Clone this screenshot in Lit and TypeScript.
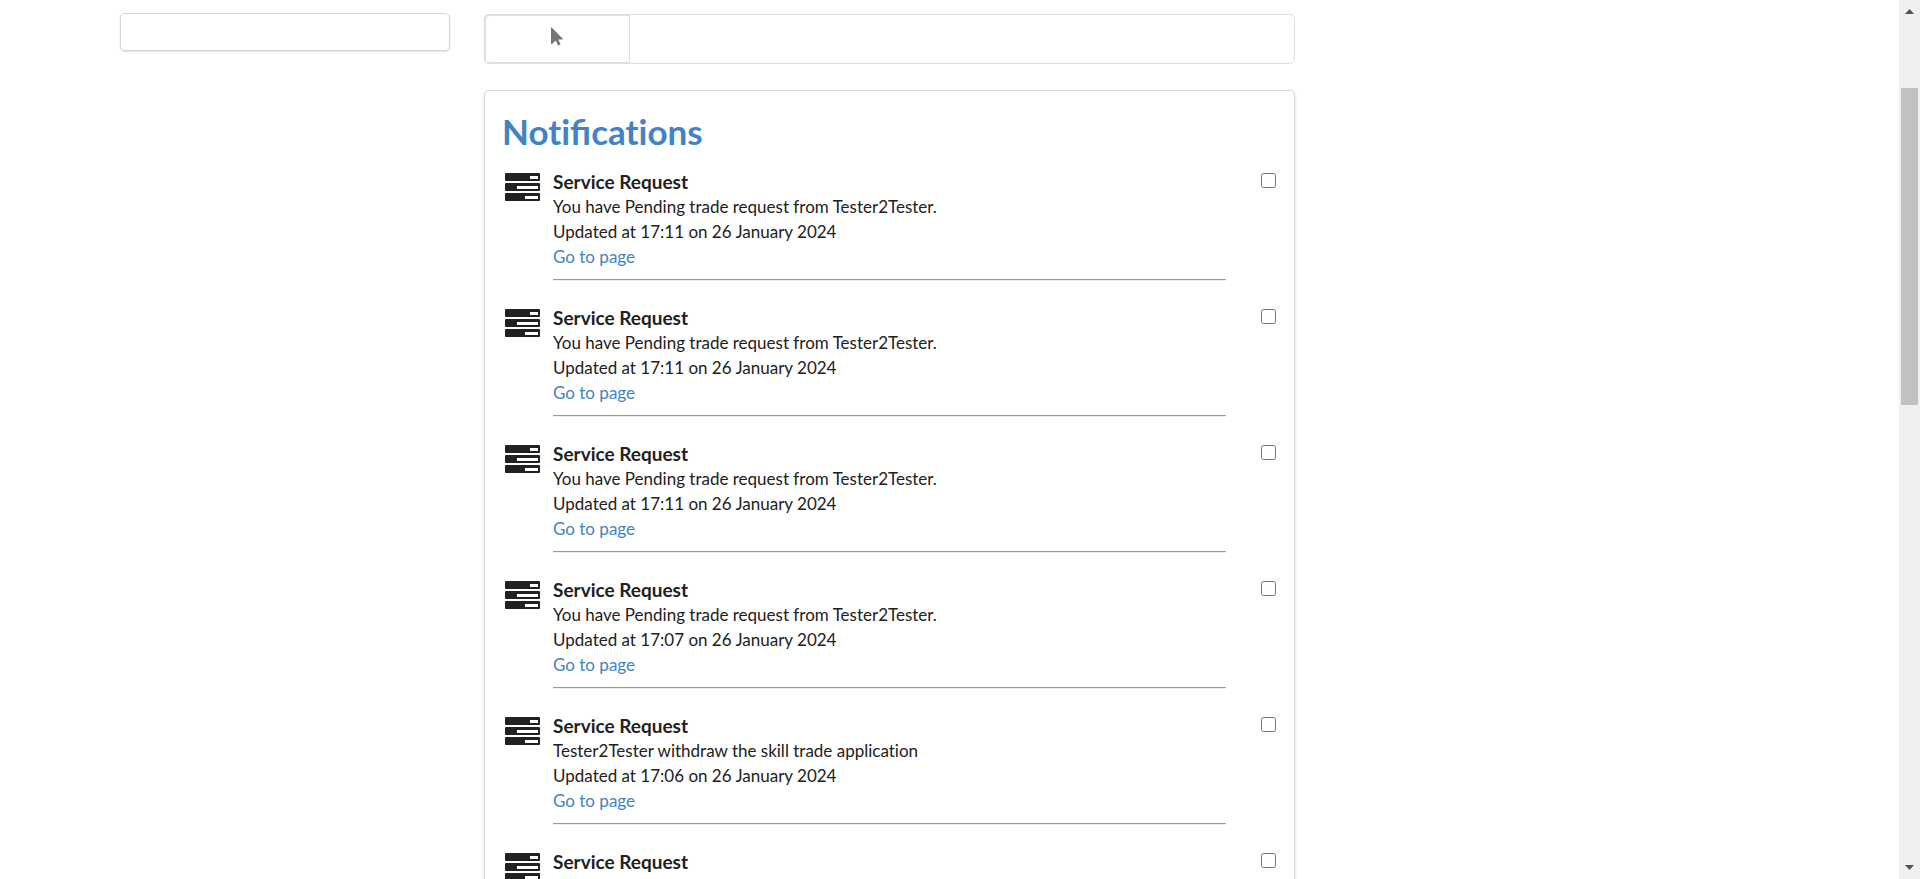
import { LitElement, html, css, svg } from "lit";
import { customElement, property } from "lit/decorators.js";

interface Notice {
  message: string;
  time: string;
}

const pending = "You have Pending trade request from Tester2Tester.";

const notices: Notice[] = [
  { message: pending, time: "17:11" },
  { message: pending, time: "17:11" },
  { message: pending, time: "17:11" },
  { message: pending, time: "17:07" },
  { message: "Tester2Tester withdraw the skill trade application", time: "17:06" },
  { message: pending, time: "17:06" },
];

const taskBar = (y: number, hole: number) => svg`
  <rect x="0" y=${y} width="35" height="8" rx="1" fill="#212121"/>
  <rect x=${hole} y=${y + 3} width=${33 - hole} height="3" fill="#fff"/>`;

@customElement("notice-item")
class NoticeItem extends LitElement {
  static styles = css`
    :host {
      display: grid;
      grid-template-columns: 36px minmax(0, 1fr) 15px;
      align-items: start;
      height: 136px;
    }
    .icon {
      display: block;
      width: 35px;
      height: 28px;
      margin-top: 3px;
    }
    .body {
      margin-left: 12px;
      margin-right: 35px;
    }
    .title {
      margin: 0;
      font-size: 19px;
      line-height: 24px;
      font-weight: 700;
    }
    .line {
      font-size: 17px;
      line-height: 25px;
    }
    .link {
      color: #4183c4;
      text-decoration: none;
    }
    .rule {
      margin: 10px 0 0;
      border: 0 solid #999;
      border-top-width: 1px;
      border-bottom: 1px solid #eee;
    }
    .check {
      width: 15px;
      height: 15px;
      margin: 3px 0 0;
    }
  `;

  @property({ attribute: false }) notice!: Notice;

  render() {
    return html`
      <svg class="icon" viewBox="0 0 35 28" aria-hidden="true">
        ${taskBar(0, 25)}${taskBar(10, 12)}${taskBar(20, 20)}
      </svg>
      <div class="body">
        <h2 class="title"><label for="pick">Service Request</label></h2>
        <div class="line">${this.notice.message}</div>
        <div class="line">Updated at ${this.notice.time} on 26 January 2024</div>
        <div class="line"><a class="link" href="#">Go to page</a></div>
        <hr class="rule" />
      </div>
      <input class="check" id="pick" type="checkbox" />
    `;
  }
}

@customElement("app-root")
class AppRoot extends LitElement {
  static styles = css`
    :host {
      display: flex;
      height: 100vh;
      overflow: hidden;
      background: #fff;
      color: #212121;
      font-family: Lato, "Liberation Sans", sans-serif;
      font-variant-ligatures: none;
    }
    .page {
      flex: 1;
      min-width: 0;
      overflow: hidden;
    }
    .columns {
      display: grid;
      grid-template-columns: minmax(0, 330fr) minmax(0, 811fr);
      column-gap: 34px;
      align-items: start;
      max-width: 1175px;
      margin-left: 120px;
      padding-top: 13px;
    }
    .panel {
      box-sizing: border-box;
      height: 38px;
      border: 1px solid #d4d4d5;
      border-radius: 5px;
      box-shadow: 0 1px 2px rgba(34, 36, 38, 0.15);
    }
    .main {
      padding-top: 1px;
    }
    .toolbar {
      display: flex;
      box-sizing: border-box;
      height: 50px;
      margin-bottom: 26px;
      border: 1px solid #dededf;
      border-radius: 5px;
    }
    .tool {
      display: flex;
      align-items: center;
      justify-content: center;
      width: 146px;
      margin: -1px 0 -1px -1px;
      padding: 0 0 6px;
      border: 1px solid #dededf;
      border-radius: 5px 0 0 5px;
      background: #fff;
      box-shadow: inset 1px 1px 0 #dededf, inset 0 -1px 0 #dededf;
      color: #767676;
    }
    .pointer {
      display: block;
      width: 12px;
      height: 19px;
    }
    .card {
      padding: 18px 18px 18px 17px;
      border: 1px solid #d9d9da;
      border-radius: 5px;
      box-shadow: 0 1px 3px rgba(34, 36, 38, 0.15);
    }
    .heading {
      margin: 0 0 17px;
      color: #4183c4;
      font-size: 35px;
      line-height: 44px;
      font-weight: 700;
    }
    .joined {
      font-variant-ligatures: common-ligatures;
    }
    .list {
      padding-left: 3px;
    }
    .scroll {
      display: flex;
      flex-direction: column;
      align-items: center;
      justify-content: space-between;
      box-sizing: border-box;
      width: 21px;
      padding: 9px 0;
      background: #f0f0f0;
    }
    .arrow {
      display: block;
      width: 9px;
      height: 5px;
      fill: #505050;
    }
    .track {
      display: grid;
      grid-template-rows: 11fr 16fr;
      flex: 1;
      width: 17px;
      padding-top: 74px;
    }
    .thumb {
      background: #c1c1c1;
    }
  `;

  render() {
    return html`
      <div class="page">
        <div class="columns">
          <aside class="panel"></aside>
          <main class="main">
            <div class="toolbar">
              <button class="tool" aria-label="Select all">
                <svg class="pointer" viewBox="0 0 12 19" fill="currentColor">
                  <path d="M0.4 0.3 L11.6 11.5 Q12 12.3 11.2 12.4 L7.4 12.5 L9.6 17.4 L7 18.6 L4.8 13.5 L1 17 Q0.2 17.5 0 16.7 V0.6 Z" />
                </svg>
              </button>
            </div>
            <section class="card">
              <h1 class="heading">Noti<span class="joined">fi</span>cations</h1>
              <div class="list">
                ${notices.map((n) => html`<notice-item .notice=${n}></notice-item>`)}
              </div>
            </section>
          </main>
        </div>
      </div>
      <div class="scroll" aria-hidden="true">
        <svg class="arrow" viewBox="0 0 9 5"><path d="M4.5 0 L9 5 H0 Z" /></svg>
        <div class="track"><div class="thumb"></div></div>
        <svg class="arrow" viewBox="0 0 9 5"><path d="M0 0 H9 L4.5 5 Z" /></svg>
      </div>
    `;
  }
}
